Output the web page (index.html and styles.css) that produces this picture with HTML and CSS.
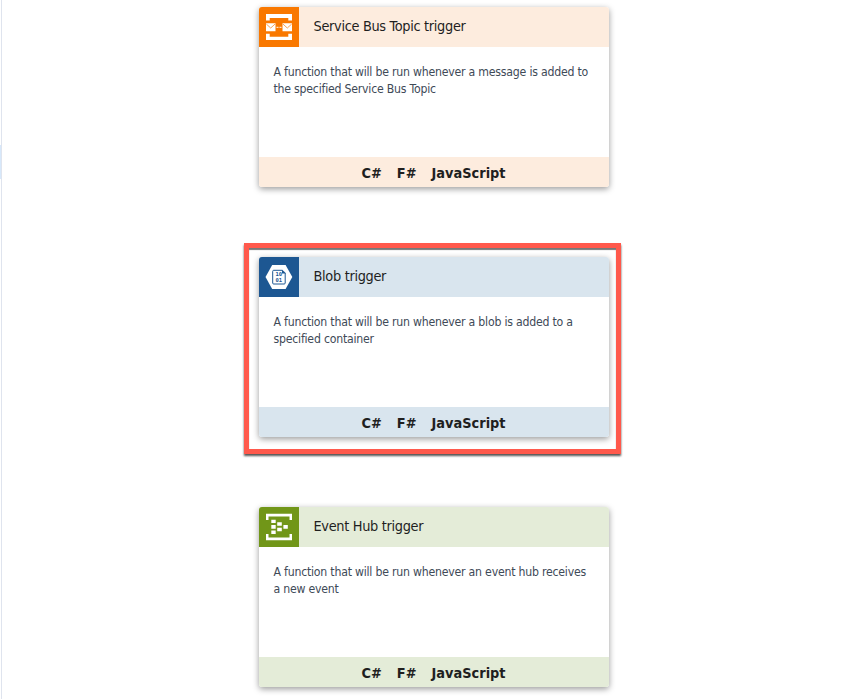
FILE: index.html
```html
<!DOCTYPE html>
<html lang="en">
<head>
<meta charset="utf-8">
<title>Function templates</title>
<link rel="stylesheet" href="styles.css">
</head>
<body>
<div class="rail"><span class="rail-active"></span></div>
<main class="templates">
  <article class="card orange">
    <header class="card-header">
      <svg class="icon" viewBox="0 0 40 40"><path fill="#fff" d="M7 7h26v6.500h-3.700V11H10.700v2.500H7zM7 33h26v-6.300h-3.700v3H10.700v-3H7z"/><path fill="#fff" d="M7 16.300h9.500v8H7zM23.500 16.300H33v8h-9.500z"/><path d="M7.300 17l4.400 4 4.400-4M23.900 17l4.400 4 4.400-4" fill="none" stroke="#f9a253" stroke-width="1"/><path d="M17.500 20.300h2M20.500 20.300h2" stroke="#ffe2c6" stroke-width="1.300"/></svg>
      <h2 class="title">Service Bus Topic trigger</h2>
    </header>
    <p class="description">A function that will be run whenever a message is added to<br>the specified Service Bus Topic</p>
    <footer class="languages"><span>C#</span><span>F#</span><span>JavaScript</span></footer>
  </article>
  <div class="highlight">
    <article class="card blue">
      <header class="card-header">
        <svg class="icon" viewBox="0 0 40 40"><path fill="#fff" d="M13.200 8h13.400L33.300 20l-6.700 12H13.200L6.500 20z"/><path fill="#fff" stroke="#1d5792" stroke-width="1" stroke-linejoin="round" d="M14.700 13.300h8.800l2.700 2.700v10q0 1-1 1H14.700q-1 0-1-1V14.300q0-1 1-1z"/><path fill="#1d5792" d="M23 13v3.500h3.700z"/><text class="bits"><tspan x="19.700" y="19.300">10</tspan><tspan x="19.700" y="25.300">01</tspan></text></svg>
        <h2 class="title">Blob trigger</h2>
      </header>
      <p class="description">A function that will be run whenever a blob is added to a<br>specified container</p>
      <footer class="languages"><span>C#</span><span>F#</span><span>JavaScript</span></footer>
    </article>
  </div>
  <article class="card green">
    <header class="card-header">
      <svg class="icon" viewBox="0 0 40 40"><path fill="#fff" d="M7 6.700h26V13h-2.500V9.500h-21V13H7zM7 33.300h26V27h-2.500v3.500h-21V27H7zM12.300 12.700h4.400V16h-4.400zM12.300 18h4.400v3.700h-4.400zM12.300 23.600h4.400V27h-4.400zM18.200 15.300h4.600v3.500h-4.600zM18.200 20.800h4.600v3.500h-4.600zM24.400 18h4.400v3.700h-4.400z"/></svg>
      <h2 class="title">Event Hub trigger</h2>
    </header>
    <p class="description">A function that will be run whenever an event hub receives<br>a new event</p>
    <footer class="languages"><span>C#</span><span>F#</span><span>JavaScript</span></footer>
  </article>
</main>
</body>
</html>
```
FILE: styles.css
```css
* { box-sizing: border-box; }
body {
  margin: 0;
  height: 699px;
  display: flex;
  overflow: hidden;
  background: #fff;
  color: #1f1f1f;
  font-family: "DejaVu Sans Condensed", "DejaVu Sans", sans-serif;
  font-stretch: condensed;
}
.rail { width: 2px; padding-top: 145px; border-right: 1px solid #dfe4ee; }
.rail-active { display: block; height: 34px; background: #d7e8fa; }
.templates {
  display: flex;
  flex-direction: column;
  align-items: flex-start;
  padding: 7px 0 0 242px;
}
.card {
  width: 350px;
  height: 180px;
  margin-left: 14.500px;
  display: flex;
  flex-direction: column;
  flex-shrink: 0;
  overflow: hidden;
  border-radius: 3px;
  background: #fff;
  box-shadow: 0 2px 6px rgba(0, 0, 0, .4);
}
.highlight {
  width: 377px;
  height: 211px;
  flex-shrink: 0;
  margin: 56px 0 53px;
  padding: 9px 0 0 9.500px;
  border: 5px solid #ff594c;
  box-shadow: 0 2px 2px #555, inset 0 2px 1px #777;
}
.highlight .card { margin-left: 0; }
.card-header { height: 40px; display: flex; align-items: center; background: var(--tint); }
.icon { width: 40px; height: 40px; background: var(--accent); }
.orange { --accent: #f97800; --tint: #fdecde; }
.blue { --accent: #1d5792; --tint: #d9e5ee; }
.green { --accent: #719618; --tint: #e4ecd8; }
.bits { font: bold 5.500px "DejaVu Sans Mono", monospace; fill: #1d5792; text-anchor: middle; }
.title {
  margin: 0 0 2px 15px;
  font-size: 14.400px;
  font-weight: 400;
  letter-spacing: -.32px;
  white-space: nowrap;
}
.description {
  flex: 1;
  margin: 0;
  padding: 17px 0 0 15px;
  font-size: 12.200px;
  line-height: 17px;
  letter-spacing: -.22px;
  color: #404a57;
  white-space: nowrap;
}
.languages {
  height: 30px;
  display: flex;
  justify-content: center;
  align-items: center;
  gap: 15px;
  padding-top: 2px;
  background: var(--tint);
  font-size: 14.400px;
  font-weight: 700;
}
```
